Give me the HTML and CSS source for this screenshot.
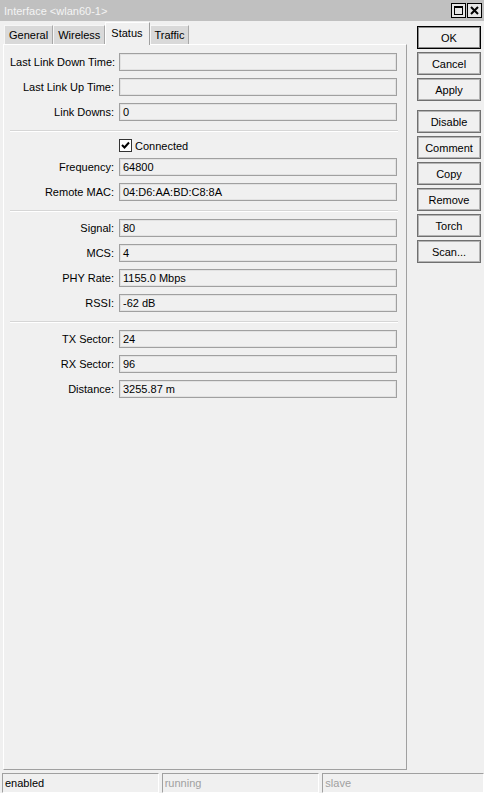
FILE: index.html
```html
<!DOCTYPE html>
<html lang="en">
<head>
    <meta charset="UTF-8">
    <meta name="viewport" content="width=device-width, initial-scale=1.0">
    <title>Interface &lt;wlan60-1&gt;</title>
    <link rel="stylesheet" href="styles.css">
</head>
<body>
    <div class="window">
        <div class="titlebar">
            <span class="title">Interface &lt;wlan60-1&gt;</span>
            <div class="wnd-buttons">
                <span class="wnd-button">
                    <svg width="13" height="13" viewBox="0 0 13 13">
                        <rect x="2.5" y="2.5" width="8" height="8" fill="none" stroke="#000"/>
                        <rect x="2" y="2" width="9" height="2" fill="#000"/>
                    </svg>
                </span>
                <span class="wnd-button">
                    <svg width="13" height="13" viewBox="0 0 13 13">
                        <path d="M3 3 L10 10 M10 3 L3 10" stroke="#000" stroke-width="2"/>
                    </svg>
                </span>
            </div>
        </div>

        <div class="main">
            <div class="left">
                <div class="tabs">
                    <div class="tab">General</div>
                    <div class="tab">Wireless</div>
                    <div class="tab active">Status</div>
                    <div class="tab">Traffic</div>
                </div>
                <div class="panel">
                    <div class="row"><label>Last Link Down Time:</label><div class="field"></div></div>
                    <div class="row"><label>Last Link Up Time:</label><div class="field"></div></div>
                    <div class="row"><label>Link Downs:</label><div class="field">0</div></div>
                    <div class="sep"></div>

                    <div class="check-row">
                        <span class="checkbox">
                            <svg width="11" height="11" viewBox="0 0 11 11">
                                <path d="M2 5 L4.5 7.5 L9 2.5" fill="none" stroke="#000" stroke-width="2"/>
                            </svg>
                        </span>
                        <span>Connected</span>
                    </div>
                    <div class="row"><label>Frequency:</label><div class="field">64800</div></div>
                    <div class="row"><label>Remote MAC:</label><div class="field">04:D6:AA:BD:C8:8A</div></div>
                    <div class="sep"></div>

                    <div class="row"><label>Signal:</label><div class="field">80</div></div>
                    <div class="row"><label>MCS:</label><div class="field">4</div></div>
                    <div class="row"><label>PHY Rate:</label><div class="field">1155.0 Mbps</div></div>
                    <div class="row"><label>RSSI:</label><div class="field">-62 dB</div></div>
                    <div class="sep"></div>

                    <div class="row"><label>TX Sector:</label><div class="field">24</div></div>
                    <div class="row"><label>RX Sector:</label><div class="field">96</div></div>
                    <div class="row"><label>Distance:</label><div class="field">3255.87 m</div></div>
                </div>
            </div>

            <div class="actions">
                <button class="btn default">OK</button>
                <button class="btn">Cancel</button>
                <button class="btn">Apply</button>
                <button class="btn group">Disable</button>
                <button class="btn">Comment</button>
                <button class="btn">Copy</button>
                <button class="btn">Remove</button>
                <button class="btn">Torch</button>
                <button class="btn">Scan...</button>
            </div>
        </div>

        <div class="statusbar">
            <div class="cell first">enabled</div>
            <div class="cell second off">running</div>
            <div class="cell third off">slave</div>
        </div>
    </div>
</body>
</html>
```

FILE: styles.css
```css
body {
    margin: 0;
    background-color: #F0F0F0;
    color: #000;
    font-family: "Liberation Sans", Arial, sans-serif;
    font-size: 11px;
}
.window {
    width: 484px;
    height: 793px;
    display: flex;
    flex-direction: column;
    overflow: hidden;
}

/* title bar */
.titlebar {
    height: 21px;
    background-color: #C0C0C0;
    display: flex;
    align-items: center;
    justify-content: space-between;
    padding: 0 2px 0 4px;
    box-sizing: border-box;
}
.title {
    color: #F4F4F4;
    font-size: 11px;
}
.wnd-buttons {
    display: flex;
    gap: 1px;
}
.wnd-button {
    width: 15px;
    height: 15px;
    box-sizing: border-box;
    border: 1px solid #000;
    background-color: #E6E6E6;
    display: flex;
    align-items: center;
    justify-content: center;
}

.main {
    display: flex;
    height: 749px;
    margin-top: 1px;
}
.left {
    width: 407px;
    display: flex;
    flex-direction: column;
}

/* tabs */
.tabs {
    display: flex;
    align-items: flex-end;
    height: 22px;
    margin-left: 4px;
    position: relative;
    z-index: 1;
}
.tab {
    height: 19px;
    line-height: 18px;
    padding: 0 4px;
    box-sizing: border-box;
    background-color: #D9D9D9;
    border: 1px solid #F6F6F6;
    border-bottom: none;
    border-right-color: #A8A8A8;
}
.tab.active {
    height: 23px;
    line-height: 20px;
    background-color: #F0F0F0;
    border-color: #FFFFFF;
    border-right-color: #A0A0A0;
    margin-bottom: -1px;
    padding: 0 6px 0 5px;
}

/* status panel */
.panel {
    margin-left: 3px;
    width: 404px;
    height: 726px;
    box-sizing: border-box;
    border: 1px solid #FFFFFF;
    border-right-color: #A0A0A0;
    border-bottom-color: #A0A0A0;
    padding: 8px 8px 0 6px;
    display: flex;
    flex-direction: column;
}
.row {
    display: flex;
    align-items: center;
    height: 18px;
    margin-bottom: 7px;
}
.row label {
    width: 104px;
    padding-right: 5px;
    text-align: right;
    white-space: nowrap;
}
.field {
    width: 278px;
    height: 18px;
    box-sizing: border-box;
    border: 1px solid #A0A0A0;
    box-shadow: inset 0 0 0 1px #E2E2E2;
    padding-left: 3px;
    line-height: 16px;
}
.sep {
    height: 1px;
    border-top: 1px solid #D6D6D6;
    background-color: #FFFFFF;
    margin: 2px 0 7px 0;
}
.check-row {
    display: flex;
    align-items: center;
    height: 13px;
    margin: 0 0 6px 109px;
    gap: 3px;
}
.checkbox {
    width: 13px;
    height: 13px;
    box-sizing: border-box;
    border: 1px solid #333333;
    background-color: #FFFFFF;
    display: flex;
    align-items: center;
    justify-content: center;
}

/* buttons on the right */
.actions {
    display: flex;
    flex-direction: column;
    gap: 3px;
    margin-left: 10px;
    padding-top: 4px;
}
.btn {
    width: 64px;
    height: 23px;
    padding: 0;
    font-family: inherit;
    font-size: 11px;
    color: #000;
    background-color: #F0F0F0;
    border: 1px solid #707070;
    box-shadow: inset 0 0 0 1px #B4B4B4;
}
.btn.default {
    border-color: #000;
    box-shadow: inset 0 0 0 1px #8A8A8A;
}
.btn.group {
    margin-top: 6px;
}

/* status bar */
.statusbar {
    display: flex;
    gap: 3px;
    padding-left: 2px;
    margin-top: 2px;
    height: 20px;
}
.cell {
    height: 20px;
    box-sizing: border-box;
    border: 1px solid #FFFFFF;
    border-top-color: #A0A0A0;
    border-left-color: #A0A0A0;
    padding-left: 2px;
    line-height: 18px;
}
.cell.first { width: 157px; }
.cell.second { width: 158px; }
.cell.third { width: 162px; }
.cell.off {
    color: #A0A0A0;
}
```
